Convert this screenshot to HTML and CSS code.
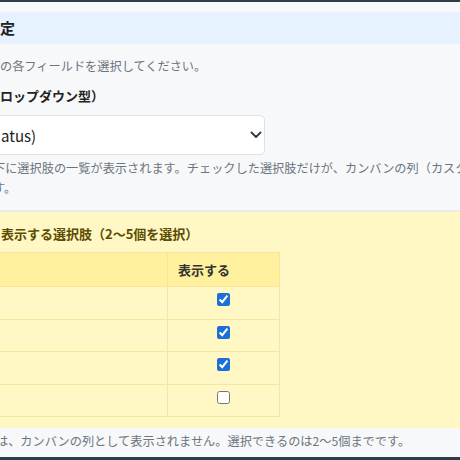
FILE: index.html
```html
<!DOCTYPE html>
<html lang="ja">
<head>
    <meta charset="UTF-8">
    <meta name="viewport" content="width=device-width, initial-scale=1.0">
    <title>フィールド設定</title>
    <link rel="stylesheet" href="styles.css">
</head>
<body>

<div class="modal">
    <div class="modal-header">
        <h3>定</h3>
    </div>

    <div class="modal-body">
        <p class="lead">の各フィールドを選択してください。</p>

        <label class="field-label" for="statusField">ロップダウン型）</label>
        <div class="select-box" id="statusField">
            <span class="select-text">atus)</span>
            <svg class="chevron" width="12" height="8" viewBox="0 0 12 8">
                <polyline points="1.5,1.5 6,6 10.5,1.5" fill="none" stroke="#343a40" stroke-width="1.8" stroke-linecap="round" stroke-linejoin="round"/>
            </svg>
        </div>
        <p class="hint hint-cut">下に選択肢の一覧が表示されます。チェックした選択肢だけが、カンバンの列（カスタ<br>す。</p>

        <div class="choices">
            <h4 class="choices-title">表示する選択肢（2〜5個を選択）</h4>
            <table class="choice-table">
                <thead>
                    <tr>
                        <th class="col-name"></th>
                        <th class="col-show">表示する</th>
                    </tr>
                </thead>
                <tbody>
                    <tr>
                        <td></td>
                        <td><input type="checkbox" checked></td>
                    </tr>
                    <tr>
                        <td></td>
                        <td><input type="checkbox" checked></td>
                    </tr>
                    <tr>
                        <td></td>
                        <td><input type="checkbox" checked></td>
                    </tr>
                    <tr>
                        <td></td>
                        <td><input type="checkbox"></td>
                    </tr>
                </tbody>
            </table>
        </div>

        <p class="hint hint-bottom">は、カンバンの列として表示されません。選択できるのは2〜5個までです。</p>
    </div>
</div>

</body>
</html>
```

FILE: styles.css
```css
body {
    margin: 0;
    height: 460px;
    overflow: hidden;
    background-color: #2f3d4b;
    font-family: "Noto Sans CJK JP", "Noto Sans", sans-serif;
    color: #333;
}

.modal {
    margin-top: 2px;
    height: 455px;
    background-color: #f7f8fa;
    overflow: hidden;
}

.modal-header {
    margin-top: 10px;
    height: 32px;
    background-color: #e6f2ff;
    display: flex;
    align-items: center;
}

.modal-header h3 {
    margin: 0;
    font-size: 15px;
    font-weight: bold;
    line-height: 20px;
    color: #222;
}

.modal-body {
    padding: 0;
}

.lead {
    margin: 12px 0 0;
    font-size: 12.2px;
    line-height: 20px;
    color: #6c757d;
}

.field-label {
    display: block;
    margin-top: 10px;
    font-size: 13px;
    font-weight: bold;
    line-height: 20px;
    color: #222;
}

.select-box {
    margin: 9px 0 0 -12px;
    width: 277px;
    height: 40px;
    box-sizing: border-box;
    background-color: #fff;
    border: 1px solid #dee2e6;
    border-radius: 5px;
    display: flex;
    align-items: center;
    justify-content: space-between;
    padding: 0 2px 0 12px;
}

.select-text {
    font-size: 15px;
    color: #222;
}

.hint {
    font-size: 12.2px;
    line-height: 20px;
    color: #6c757d;
    white-space: nowrap;
}

.hint-cut {
    margin: 3px 0 0 -7px;
}

.choices {
    margin-top: 12px;
    border-top: 2px solid #ebebeb;
    background-color: #fff8c5;
    padding: 12px 0 11px;
}

.choices-title {
    margin: 0 0 0 1px;
    font-size: 13px;
    font-weight: bold;
    line-height: 20px;
    color: #5c4b00;
}

.choice-table {
    margin: 8px 0 0 -20px;
    width: 300px;
    border-collapse: collapse;
}

.choice-table th,
.choice-table td {
    border: 1px solid #f4e6a2;
    padding: 0 10px;
    text-align: left;
}

.choice-table th {
    height: 33px;
    background-color: #fff09d;
    font-size: 13px;
    font-weight: bold;
    color: #333;
}

.choice-table td {
    height: 31.5px;
}

.col-name {
    width: 166px;
}

.choice-table input {
    display: block;
    margin: 0 0 6px 39px;
    width: 13px;
    height: 13px;
    accent-color: #1b6fd6;
}

.hint-bottom {
    margin: 3px 0 0 -4px;
}
```
